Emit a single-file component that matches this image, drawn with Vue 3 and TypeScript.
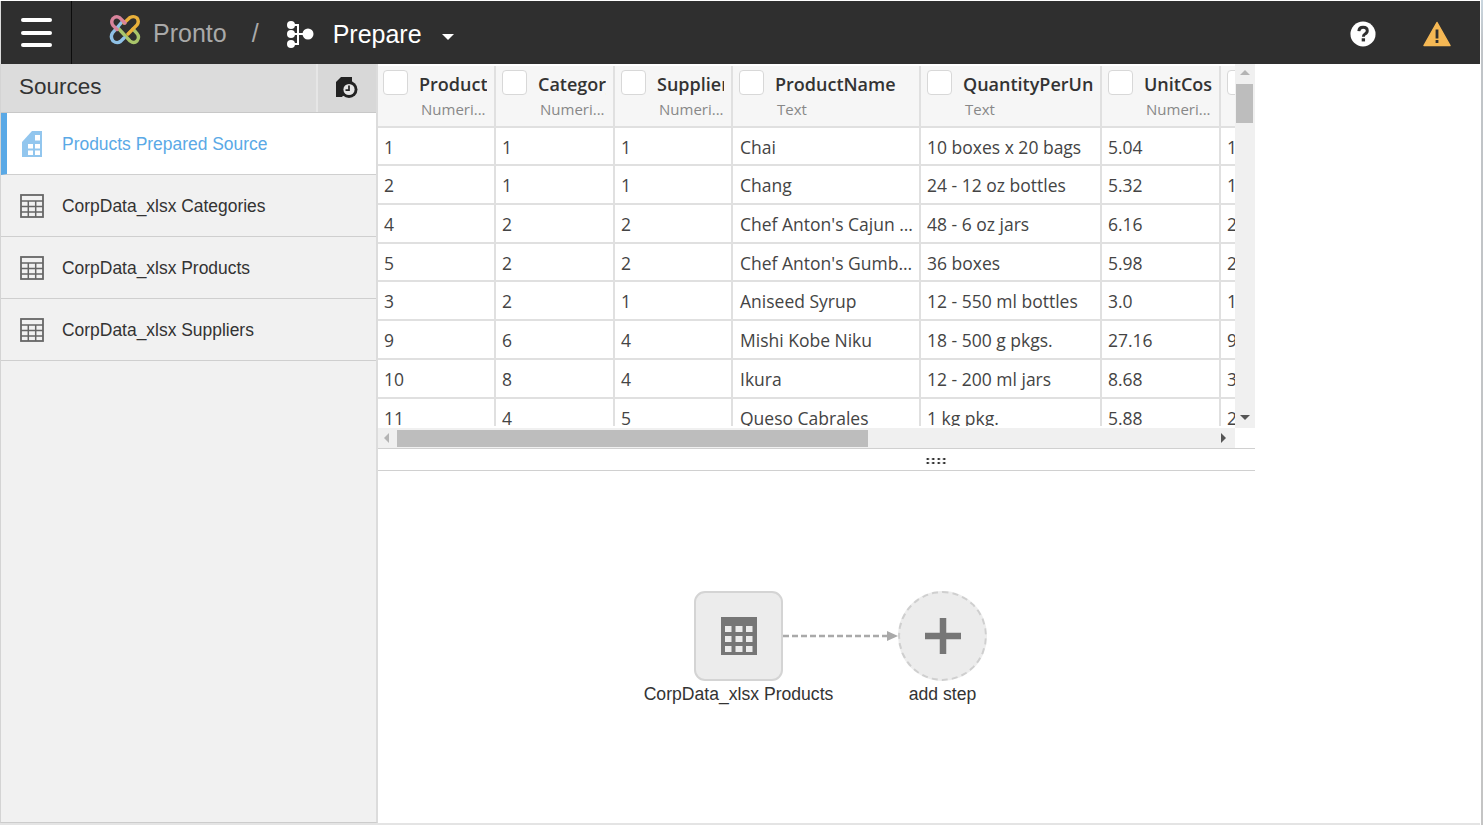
<script setup lang="ts">
interface Col { name: string; type: string; width: number; }
const cols: Col[] = [
  { name: 'ProductID', type: 'Numeri...', width: 118 },
  { name: 'CategoryID', type: 'Numeri...', width: 119 },
  { name: 'SupplierID', type: 'Numeri...', width: 118 },
  { name: 'ProductName', type: 'Text', width: 188 },
  { name: 'QuantityPerUnit', type: 'Text', width: 181 },
  { name: 'UnitCost', type: 'Numeri...', width: 119 },
  { name: 'UnitPrice', type: 'Numeri...', width: 119 },
];
const rows: string[][] = [
  ['1', '1', '1', 'Chai', '10 boxes x 20 bags', '5.04', '18'],
  ['2', '1', '1', 'Chang', '24 - 12 oz bottles', '5.32', '19'],
  ['4', '2', '2', "Chef Anton's Cajun Seasoning", '48 - 6 oz jars', '6.16', '22'],
  ['5', '2', '2', "Chef Anton's Gumbo Mix", '36 boxes', '5.98', '21'],
  ['3', '2', '1', 'Aniseed Syrup', '12 - 550 ml bottles', '3.0', '10'],
  ['9', '6', '4', 'Mishi Kobe Niku', '18 - 500 g pkgs.', '27.16', '97'],
  ['10', '8', '4', 'Ikura', '12 - 200 ml jars', '8.68', '31'],
  ['11', '4', '5', 'Queso Cabrales', '1 kg pkg.', '5.88', '21'],
];
const sources: string[] = ['CorpData_xlsx Categories', 'CorpData_xlsx Products', 'CorpData_xlsx Suppliers'];
</script>

<template>
  <div class="page">
    <div class="app">
      <header class="topbar">
        <button class="menu" aria-label="menu"><span></span><span></span><span></span></button>
        <div class="brand">
          <svg class="logo" width="32" height="32" viewBox="0 0 32 32" fill="none" stroke-width="3.4" stroke-linecap="round">
            <path d="M9 14 L21 27 Q25 30 28 27 Q31 23 28 19.5 L24 15" stroke="#a9c56a" />
            <path d="M13 8 L3.5 19 Q1 23 4 27 Q8 30 11.5 27.5 L15 24" stroke="#8fc1e6" />
            <path d="M15 9 L21 3.5 Q25 1.5 28 4 Q30.5 7.5 28 11 L19 20" stroke="#e9b03a" />
            <path d="M16 9 L11 4 Q7.5 1.5 4 4.5 Q1.5 8 4 11.5 L8 15.5" stroke="#d8849c" />
          </svg>
          <span class="pronto">Pronto</span>
          <span class="slash">/</span>
          <svg class="prep" width="28" height="28" viewBox="0 0 28 28" fill="#fff">
            <circle cx="5" cy="5" r="4" /><circle cx="5" cy="14" r="4" /><circle cx="5" cy="24" r="4" /><circle cx="22" cy="14" r="5.5" />
            <path d="M5 5 H12 V24 H5 M5 14 H20" fill="none" stroke="#fff" stroke-width="2" />
          </svg>
          <span class="prepare">Prepare</span>
          <span class="caret"></span>
        </div>
        <div class="top-right">
          <svg class="help" width="26" height="26" viewBox="0 0 28 28">
            <circle cx="14" cy="14" r="13.5" fill="#fff" />
            <path d="M9.5 11 Q9.8 6.8 14 6.8 Q18.6 6.8 18.6 10.6 Q18.6 12.8 16.2 14 Q14.4 15 14.4 17" fill="none" stroke="#2f2f2f" stroke-width="3.2" />
            <rect x="12.6" y="18.6" width="3.6" height="3.4" fill="#2f2f2f" />
          </svg>
          <svg class="warn" width="28" height="26" viewBox="0 0 28 26">
            <path d="M14 1.5 L27 24.5 H1 Z" fill="#f5b854" stroke="#f5b854" stroke-width="1.5" stroke-linejoin="round" />
            <rect x="12.6" y="8.5" width="2.8" height="9" fill="#2f2f2f" />
            <rect x="12.6" y="19" width="2.8" height="3" fill="#2f2f2f" />
          </svg>
        </div>
      </header>

      <div class="body">
        <aside class="sidebar">
          <div class="side-head">
            <span class="side-title">Sources</span>
            <div class="side-action">
              <svg width="22" height="22" viewBox="0 0 22 22">
                <path d="M5 0 H16 V8 L6 20 H0 V5 Z" fill="#222" />
                <circle cx="13" cy="12.5" r="8.5" fill="#222" />
                <circle cx="13" cy="12.5" r="5.6" fill="#e4e4e4" />
                <path d="M13 8.5 V13.2 H9.5" fill="none" stroke="#222" stroke-width="1.7" />
              </svg>
            </div>
          </div>
          <div class="src active">
            <svg width="20" height="26" viewBox="0 0 20 26">
              <path d="M10 0 H20 V26 H0 V11 Z" fill="#92c6ee" />
              <g fill="#fff">
                <rect x="13" y="4" width="5" height="5.5" />
                <rect x="6" y="13" width="5" height="4.5" /><rect x="13" y="13" width="5" height="4.5" />
                <rect x="6" y="19.5" width="5" height="4.5" /><rect x="13" y="19.5" width="5" height="4.5" />
              </g>
            </svg>
            <span>Products Prepared Source</span>
          </div>
          <div v-for="s in sources" :key="s" class="src">
            <svg width="24" height="24" viewBox="0 0 24 24" fill="none" stroke="#666" stroke-width="1.8">
              <rect x="1" y="1" width="22" height="22" />
              <path d="M1 7 H23 M1 12.5 H23 M1 18 H23 M8.3 7 V23 M15.7 7 V23" stroke-width="1.5" />
            </svg>
            <span>{{ s }}</span>
          </div>
        </aside>

        <main class="main">
          <section class="table-area">
            <div class="table-view">
              <div class="table-clip">
                <div class="tr thead">
                  <div v-for="c in cols" :key="c.name" class="th" :style="{ width: c.width + 'px' }">
                    <span class="check"></span>
                    <div class="th-text">
                      <div class="th-name">{{ c.name }}</div>
                      <div class="th-type">{{ c.type }}</div>
                    </div>
                  </div>
                </div>
                <div v-for="(r, i) in rows" :key="i" class="tr">
                  <div v-for="(v, j) in r" :key="j" class="td" :style="{ width: cols[j].width + 'px' }">{{ v }}</div>
                </div>
              </div>
              <div class="vbar">
                <span class="arrow up"></span>
                <div class="vthumb"></div>
                <span class="arrow down"></span>
              </div>
            </div>
            <div class="hbar">
              <span class="arrow left"></span>
              <div class="htrack"><div class="hthumb"></div></div>
              <span class="arrow right"></span>
            </div>
          </section>
          <div class="splitter"><span class="grip"></span></div>
          <section class="flow">
            <div class="flow-row">
              <div class="step">
                <div class="node">
                  <svg width="36" height="38" viewBox="0 0 36 38">
                    <rect width="36" height="38" fill="#767676" />
                    <g fill="#ececec">
                      <rect x="4" y="9" width="6.5" height="6" /><rect x="14.5" y="9" width="7" height="6" /><rect x="25" y="9" width="6.5" height="6" />
                      <rect x="4" y="19" width="6.5" height="6" /><rect x="14.5" y="19" width="7" height="6" /><rect x="25" y="19" width="6.5" height="6" />
                      <rect x="4" y="29" width="6.5" height="6" /><rect x="14.5" y="29" width="7" height="6" /><rect x="25" y="29" width="6.5" height="6" />
                    </g>
                  </svg>
                </div>
                <div class="step-label">CorpData_xlsx Products</div>
              </div>
              <svg class="link" width="115" height="12" viewBox="0 0 115 12">
                <path d="M0 6 H104" stroke="#a9a9a9" stroke-width="2.4" stroke-dasharray="6 3" fill="none" />
                <path d="M104 1 L115 6 L104 11 Z" fill="#a9a9a9" />
              </svg>
              <div class="step">
                <div class="node round">
                  <svg width="36" height="36" viewBox="0 0 36 36"><path d="M18 0 V36 M0 18 H36" stroke="#767676" stroke-width="6.5" /></svg>
                </div>
                <div class="step-label">add step</div>
              </div>
            </div>
          </section>
        </main>
      </div>
    </div>
    <div class="edge"></div>
  </div>
</template>

<style>
html, body { margin: 0; padding: 0; background: #fff; }
</style>

<style scoped>
.page { width: 1484px; height: 825px; display: flex; overflow: hidden; background: #fff; }
.edge { width: 2px; margin-left: 1px; flex: none; background: linear-gradient(180deg, #c9d6df 0, #c0c4c8 40px, #c4c4c4 100%); }
.app {
  width: 1480px; height: 825px; flex: none; box-sizing: border-box; overflow: hidden;
  padding-top: 1px; display: flex; flex-direction: column;
  font-family: "Liberation Sans", Arial, sans-serif; background: #fff;
  border-bottom: 2px solid #e4e4e4;
}
.topbar { height: 63px; flex: none; background: #2f2f2f; display: flex; align-items: stretch; border-left: 1px solid #dcdcdc; box-sizing: border-box; }
.menu { width: 71px; flex: none; background: none; border: 0; border-right: 1px solid #0c0c0c; padding: 17px 19px 17px 20px; display: flex; flex-direction: column; justify-content: space-between; box-sizing: border-box; }
.menu span { display: block; height: 4px; background: #fff; border-radius: 2px; }
.brand { display: flex; align-items: center; padding-left: 37px; }
.logo { margin-top: -5px; }
.pronto { font-size: 25px; color: #a9a9a9; margin-left: 12px; margin-top: 2px; }
.slash { font-size: 25px; color: #a9a9a9; margin-left: 25px; margin-top: 2px; }
.prep { margin-left: 27px; margin-top: 2px; }
.prepare { font-size: 25px; color: #fff; margin-left: 19px; margin-top: 4px; }
.caret { width: 0; height: 0; border: 6px solid transparent; border-top: 6px solid #fff; border-bottom: 0; margin-left: 20px; margin-top: 8px; }
.top-right { margin-left: auto; display: flex; align-items: center; gap: 47px; padding-right: 29px; }
.help { margin-top: 3px; }
.warn { margin-top: 3px; }
.body { flex: 1; display: flex; min-height: 0; }
.sidebar { width: 378px; flex: none; background: #f1f1f1; border-left: 1px solid #d4d4d4; border-right: 2px solid #dcdcdc; border-bottom: 1px solid #cccccc; box-sizing: border-box; }
.side-head { height: 48px; display: flex; background: #dcdcdc; border-bottom: 1px solid #c8c8c8; }
.side-title { flex: 1; padding-left: 18px; font-size: 22.5px; line-height: 46px; color: #333; }
.side-action { width: 60px; border-left: 2px solid #e6e6e6; background: #d8d8d8; display: flex; align-items: center; justify-content: center; box-sizing: border-box; }
.src { height: 61px; border-bottom: 1px solid #cfcfcf; display: flex; align-items: center; gap: 18px; padding-left: 19px; font-size: 17.45px; color: #333; }
.src span { margin-top: 1px; }
.src.active { background: #fff; color: #5aa9e6; border-left: 6px solid #5aa9e6; padding-left: 15px; gap: 20px; }
.main { width: 877px; flex: none; display: flex; flex-direction: column; }
.table-area { flex: none; height: 385px; display: flex; flex-direction: column; border-bottom: 1px solid #d0d0d0; box-sizing: border-box; }
.table-view { display: flex; height: 364px; }
.table-clip { width: 857px; height: 362px; overflow: hidden; font-family: "Open Sans", sans-serif; background: #fff; padding-top: 2px; box-sizing: border-box; }
.tr { display: flex; width: 980px; height: 38.7px; box-sizing: border-box; }
.thead { height: 61.7px; background: #f6f6f6; border-bottom: 2px solid #e0e0e0; }
.th { flex: none; display: flex; box-sizing: border-box; border-right: 2px solid #e0e0e0; padding: 4px 7px 0 6px; overflow: hidden; }
.th:first-child { padding-left: 5px; }
.check { flex: none; width: 25px; height: 25px; border: 1px solid #d8d8d8; border-radius: 4px; background: #fff; box-sizing: border-box; }
.th-text { margin-left: 11px; min-width: 0; flex: 1; overflow: hidden; }
.th-name { font-size: 18px; font-weight: 600; color: #333; line-height: 28px; white-space: nowrap; overflow: hidden; }
.th-type { font-size: 15px; color: #888; line-height: 22px; margin-top: 0; white-space: nowrap; margin-left: 2px; }
.td { flex: none; box-sizing: border-box; border-right: 2px solid #e0e0e0; border-bottom: 2px solid #e0e0e0; padding: 0 6px; font-size: 17.5px; line-height: 38px; color: #444; white-space: nowrap; overflow: hidden; text-overflow: ellipsis; }
.td:nth-child(4) { padding-left: 7px; }
.vbar { width: 20px; background: #f0f0f0; display: flex; flex-direction: column; align-items: stretch; position: relative; padding-top: 20px; box-sizing: border-box; }
.vthumb { height: 39px; background: #bdbdbd; margin: 0 2px 0 1px; }
.arrow { position: absolute; width: 0; height: 0; border: 5px solid transparent; }
.arrow.up { top: 6px; left: 5px; border-bottom: 5px solid #b4b4b4; border-top: 0; }
.arrow.down { bottom: 8px; left: 5px; border-top: 5px solid #555; border-bottom: 0; }
.hbar { width: 857px; height: 20px; background: #f0f0f0; position: relative; display: flex; }
.arrow.left { left: 6px; top: 5px; border-right: 5px solid #b4b4b4; border-left: 0; }
.arrow.right { right: 9px; top: 5px; border-left: 5px solid #555; border-right: 0; }
.htrack { margin-left: 19px; width: 820px; }
.hthumb { width: 471px; height: 17px; margin-top: 2px; background: #bdbdbd; }
.splitter { height: 22px; border-bottom: 1px solid #d0d0d0; display: flex; align-items: center; box-sizing: border-box; padding-left: 547px; padding-top: 2px; }
.grip { width: 22px; height: 8px; background-image: radial-gradient(#333 1.4px, transparent 1.6px); background-size: 5.5px 4px; }
.flow { flex: 1; display: flex; justify-content: center; }
.flow-row { display: flex; align-items: flex-start; padding-top: 120px; margin-left: 48px; height: fit-content; }
.step { width: 89px; display: flex; flex-direction: column; align-items: center; }
.node { width: 89px; height: 90px; flex: none; box-sizing: border-box; border: 2px solid #d4d4d4; border-radius: 11px; background: #ececec; display: flex; align-items: center; justify-content: center; }
.node.round { border-radius: 50%; border: 2px dashed #cfcfcf; }
.step-label { font-size: 17.6px; line-height: 20px; color: #333; white-space: nowrap; margin-top: 3px; }
.link { flex: none; margin: 39px 0 0 0; width: 115px; }
</style>
